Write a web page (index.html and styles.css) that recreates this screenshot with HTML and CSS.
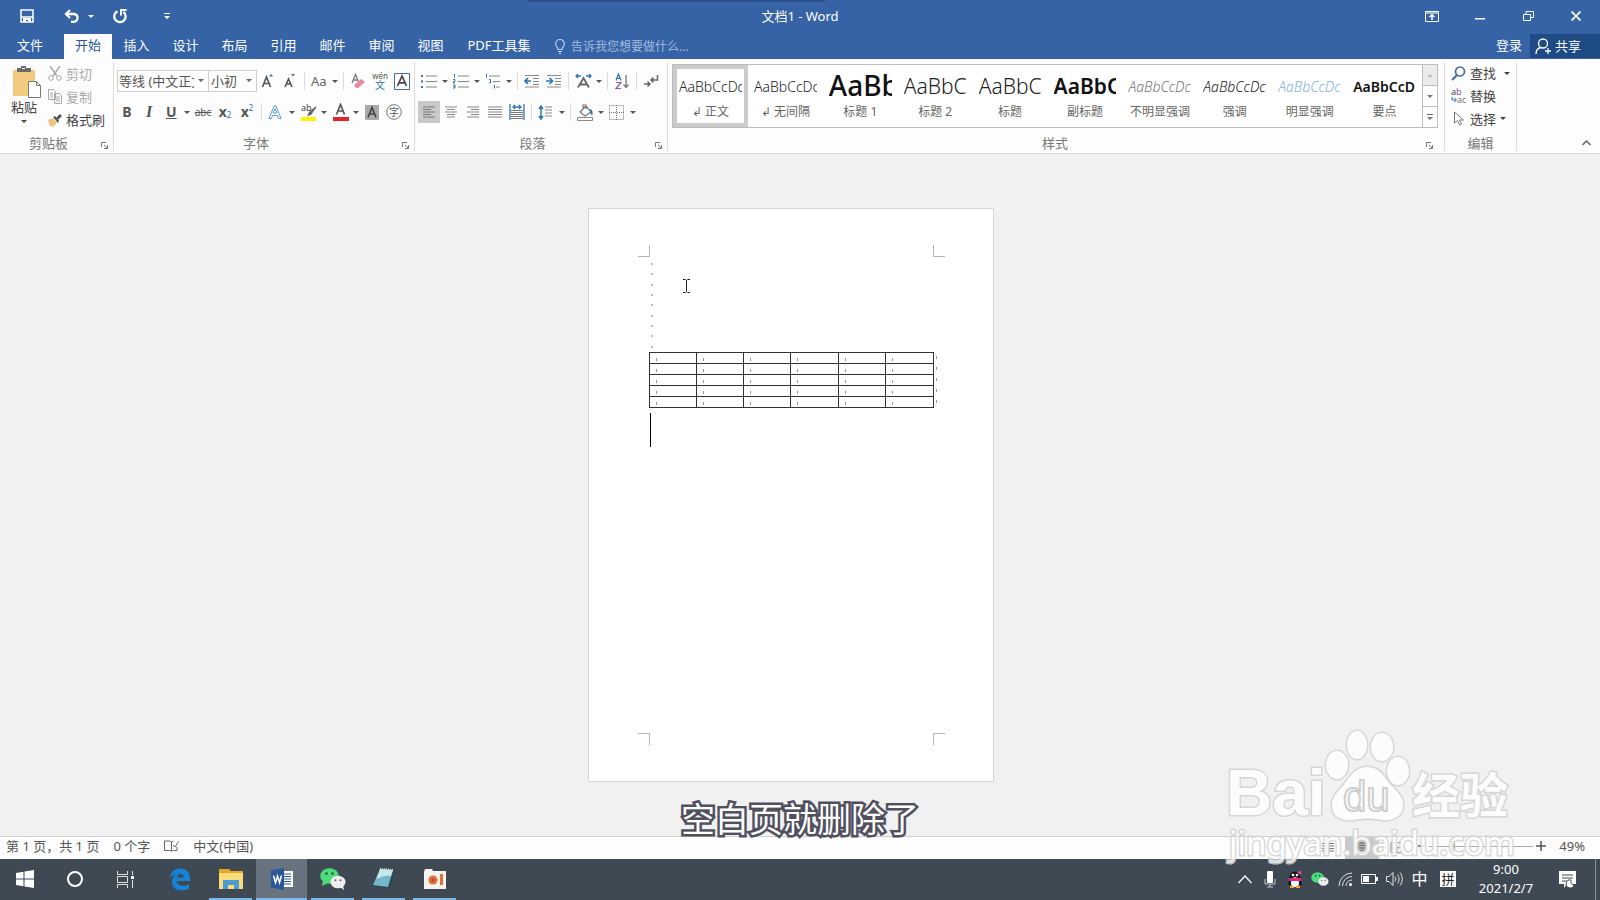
FILE: index.html
```html
<!DOCTYPE html>
<html lang="zh-CN">
<head>
    <meta charset="UTF-8">
    <meta name="viewport" content="width=device-width, initial-scale=1.0">
    <title>文档1 - Word</title>
    <link rel="stylesheet" href="styles.css">
</head>
<body>
<header class="titlebar">
    <div class="quick">
        <button class="quick-save" aria-label="保存"><svg width="14" height="14" viewBox="0 0 14 14"><path d="M1 1h12v12H1zM1 8h12" fill="none" stroke="#fff" stroke-width="1.5"/><path d="M3 9h8v4H8v-2H6v2H3z" fill="#fff"/></svg></button>
        <button class="quick-undo" aria-label="撤消"><svg width="16" height="14" viewBox="0 0 16 14"><path d="M2 5h7c6 0 6 7 0 8H7" fill="none" stroke="#fff" stroke-width="2.300"/><path d="M6 1L2 5l4 4" fill="none" stroke="#fff" stroke-width="2.300"/></svg></button>
        <button class="quick-more" aria-label="撤消列表"><i class="arrow"></i></button>
        <button class="quick-redo" aria-label="重复"><svg width="16" height="16" viewBox="0 0 16 16"><path d="M5.500 3.300A5.700 5.700 0 1 0 11.500 4" fill="none" stroke="#fff" stroke-width="2.300"/><path d="M9 7.500V2h5.500" fill="none" stroke="#fff" stroke-width="2"/></svg></button>
        <button class="quick-custom" aria-label="自定义快速访问工具栏"><svg width="6" height="6" viewBox="0 0 6 6"><path d="M0 0h6v1H0zM0 3h6L3 6z" fill="#fff"/></svg></button>
    </div>
    <div class="doc-name">文档1 - Word</div>
    <div class="window-buttons">
        <button aria-label="功能区显示选项"><svg width="14" height="11" viewBox="0 0 14 11"><path d="M.5.5h13v10H.5zM.5 2h13" fill="none" stroke="#fff"/><path d="M7 9V4M4.500 6L7 3.500 9.500 6" fill="none" stroke="#fff" stroke-width="1.500"/></svg></button>
        <button aria-label="最小化"><svg width="10" height="11" viewBox="0 0 10 11"><path d="M0 7h10v1.500H0z" fill="#fff"/></svg></button>
        <button aria-label="向下还原"><svg width="11" height="10" viewBox="0 0 11 10"><path d="M.5 3.500h7v6h-7zM3 3V.5h7.500v6H8" fill="none" stroke="#fff"/></svg></button>
        <button aria-label="关闭"><svg width="10" height="10" viewBox="0 0 10 10"><path d="M.5.5l9 9M9.500.5l-9 9" stroke="#fff" stroke-width="1.700"/></svg></button>
    </div>
</header>

<nav class="tabs">
    <a href="#" class="file">文件</a>
    <a href="#" class="active">开始</a>
    <a href="#">插入</a>
    <a href="#">设计</a>
    <a href="#">布局</a>
    <a href="#">引用</a>
    <a href="#">邮件</a>
    <a href="#">审阅</a>
    <a href="#">视图</a>
    <a href="#" class="wide">PDF工具集</a>
    <label class="tellme">
        <svg width="10" height="15" viewBox="0 0 10 15"><path d="M3 10.500C3 8 .7 7.500.7 4.800a4.300 4.300 0 0 1 8.600 0C9.300 7.500 7 8 7 10.500zM3 12.500h4M4 14.300h2" fill="none" stroke="#b9cbe8" stroke-width="1.200"/></svg>
        <input type="text" placeholder="告诉我您想要做什么..." aria-label="告诉我您想要做什么">
    </label>
    <a href="#" class="login">登录</a>
    <button class="share"><svg width="17" height="17" viewBox="0 0 17 17"><circle cx="8" cy="5.500" r="4.500" fill="none" stroke="#fff" stroke-width="1.300"/><path d="M1 16c0-4 2-6 5-6.500M13 10v6M10 13h6" fill="none" stroke="#fff" stroke-width="1.300"/></svg>共享</button>
</nav>

<section class="ribbon">
    <div class="group clipboard">
        <div class="group-body">
            <button class="paste">
                <svg width="30" height="32" viewBox="0 0 30 32"><path d="M1 4h22v26H1z" fill="#f3cb80"/><path d="M5 6V2h4V0h5v2h5v4z" fill="#6a6a6a"/><path d="M10 2h3v1h-3z" fill="#fff"/><path d="M16.500 15.500h8l4 4v12h-12z" fill="#fff" stroke="#777"/><path d="M24.500 15.500v4h4" fill="none" stroke="#777"/></svg>
                粘贴
                <i class="arrow"></i>
            </button>
            <div class="stack">
                <button class="off"><svg width="14" height="15" viewBox="0 0 14 15"><path d="M2 0l7 10M12 0L5 10" fill="none" stroke="#aaa" stroke-width="1.500"/><circle cx="3" cy="12" r="2.300" fill="none" stroke="#aaa"/><circle cx="11" cy="12" r="2.300" fill="none" stroke="#aaa"/></svg>剪切</button>
                <button class="off"><svg width="14" height="15" viewBox="0 0 14 15"><path d="M.5.5h5l2 2v8h-7zM6.500 4.500h5l2 2v8h-7z" fill="#fff" stroke="#aaa"/><path d="M2 4h3M2 6h3M2 8h3M8 8h4M8 10h4M8 12h4" stroke="#aaa"/></svg>复制</button>
                <button><svg width="14" height="14" viewBox="0 0 14 14"><path d="M0 7l5-2 4 5-4 4-3-1z" fill="#f0c27b"/><path d="M5 4l2-1 4 5-1 2z" fill="#555"/><path d="M8 5l4-4 2 2-4 4z" fill="#555"/></svg>格式刷</button>
            </div>
        </div>
        <footer>剪贴板<button class="launcher" aria-label="剪贴板选项"><svg width="7" height="7" viewBox="0 0 7 7"><path d="M.5 5V.5H5M3 3l3 3M6.500 3v3.500H3" fill="none" stroke="#777"/></svg></button></footer>
    </div>

    <div class="group font">
        <div class="group-body rows">
            <div class="row">
                <span class="combo combo-name"><select aria-label="字体"><option>等线 (中文正文)</option></select></span>
                <span class="combo combo-size"><select aria-label="字号"><option>小初</option></select></span>
                <button class="tool" aria-label="增大字号"><svg width="14" height="16" viewBox="0 0 14 16"><path d="M1.500 14L5.500 4l4 10M3 10.500h5" fill="none" stroke="#555" stroke-width="1.600"/><path d="M8 3.500L10 1l2 2.500z" fill="#41719c"/></svg></button>
                <button class="tool" aria-label="减小字号"><svg width="14" height="16" viewBox="0 0 14 16"><path d="M2 14l3.500-8L9 14M3.500 11h4" fill="none" stroke="#555" stroke-width="1.600"/><path d="M8 1l2 2.500L12 1z" fill="#41719c"/></svg></button>
                <i class="sep"></i>
                <button class="tool drop" aria-label="更改大小写"><span class="case">Aa</span><i class="arrow"></i></button>
                <i class="sep"></i>
                <button class="tool" aria-label="清除格式"><svg width="16" height="16" viewBox="0 0 16 16"><path d="M2 10L5.500 1.500 9 10M3.500 7h4" fill="none" stroke="#777" stroke-width="1.300"/><path d="M4 12l7-6 4 3-7 6H6z" fill="#e88ba0"/></svg></button>
                <button class="tool pinyin" aria-label="拼音指南"><small>wén</small><b>文</b></button>
                <button class="tool" aria-label="字符边框"><svg width="16" height="17" viewBox="0 0 16 17"><path d="M.5.5h15v16H.5z" fill="#fff" stroke="#41719c"/><path d="M3.500 13L8 3l4.500 10M5 9.800h6" fill="none" stroke="#444" stroke-width="1.700"/></svg></button>
            </div>
            <div class="row">
                <button class="tool letter"><b>B</b></button>
                <button class="tool letter serif"><b><em>I</em></b></button>
                <button class="tool letter drop"><b><u>U</u></b><i class="arrow"></i></button>
                <button class="tool strike">abc</button>
                <button class="tool letter script"><b>x</b><sub>2</sub></button>
                <button class="tool letter script"><b>x</b><sup>2</sup></button>
                <i class="sep"></i>
                <button class="tool drop" aria-label="文本效果"><svg width="14" height="15" viewBox="0 0 14 15"><path d="M1 13.500L6 1h2l5 12.500h-2.500l-1-3h-5l-1 3zM5 8h4L7 3.500z" fill="#fff" stroke="#5b9bd5"/></svg><i class="arrow"></i></button>
                <button class="tool drop" aria-label="突出显示"><svg width="17" height="18" viewBox="0 0 17 18"><path d="M1 14h15v4H1z" fill="#fff200"/><text x="1" y="8" class="tiny">ab</text><path d="M16 3L9 9l-2 4 4-1 5-7z" fill="#666"/></svg><i class="arrow"></i></button>
                <button class="tool drop" aria-label="字体颜色"><svg width="17" height="18" viewBox="0 0 17 18"><path d="M1 14h16v4H1z" fill="#e3242b"/><path d="M4.500 11.500L8.500 1.500l4 10M6 8h5" fill="none" stroke="#555" stroke-width="1.700"/></svg><i class="arrow"></i></button>
                <button class="tool" aria-label="字符底纹"><svg width="14" height="15" viewBox="0 0 14 15"><path d="M0 0h14v15H0z" fill="#aaa"/><path d="M3 12.500L7 2.500l4 10M4.500 9h5" fill="none" stroke="#444" stroke-width="1.700"/></svg></button>
                <button class="tool" aria-label="带圈字符"><svg width="16" height="16" viewBox="0 0 16 16"><circle cx="8" cy="8" r="7.300" fill="none" stroke="#777"/><text x="3" y="12" class="ringed">字</text></svg></button>
            </div>
        </div>
        <footer>字体<button class="launcher" aria-label="字体选项"><svg width="7" height="7" viewBox="0 0 7 7"><path d="M.5 5V.5H5M3 3l3 3M6.500 3v3.500H3" fill="none" stroke="#777"/></svg></button></footer>
    </div>

    <div class="group paragraph">
        <div class="group-body rows">
            <div class="row">
                <button class="tool drop" aria-label="项目符号"><svg width="16" height="15" viewBox="0 0 16 15"><path d="M0 1h2v2H0zM0 6.500h2v2H0zM0 12h2v2H0z" fill="#41719c"/><path d="M5 2h11M5 7.500h11M5 13h11" stroke="#888"/></svg><i class="arrow"></i></button>
                <button class="tool drop" aria-label="编号"><svg width="16" height="15" viewBox="0 0 16 15"><path d="M1.500 0v3.500M0 5.500h2v2H.5V9H2M0 11h2v3H0M.5 12.500H2" fill="none" stroke="#41719c"/><path d="M5 2h11M5 7.500h11M5 13h11" stroke="#888"/></svg><i class="arrow"></i></button>
                <button class="tool drop" aria-label="多级列表"><svg width="16" height="15" viewBox="0 0 16 15"><path d="M1.500 0v3.500M4 5.500h1.500V9H4M9.500 11v3.500" fill="none" stroke="#41719c"/><path d="M4 2h11M8 7.500h7M11 13h4" stroke="#888"/></svg><i class="arrow"></i></button>
                <i class="sep"></i>
                <button class="tool" aria-label="减少缩进量"><svg width="16" height="14" viewBox="0 0 16 14"><path d="M1 1.500h14M9 4.500h6M9 7.500h6M9 10.500h6M1 13h14" stroke="#888"/><path d="M7 7H1M4 4L1 7l3 3" fill="none" stroke="#2e75b6" stroke-width="1.700"/></svg></button>
                <button class="tool" aria-label="增加缩进量"><svg width="16" height="14" viewBox="0 0 16 14"><path d="M1 1.500h14M9 4.500h6M9 7.500h6M9 10.500h6M1 13h14" stroke="#888"/><path d="M0 7h6M3.500 4l3 3-3 3" fill="none" stroke="#2e75b6" stroke-width="1.700"/></svg></button>
                <i class="sep"></i>
                <button class="tool drop" aria-label="中文版式"><svg width="17" height="16" viewBox="0 0 17 16"><path d="M3 14.500L8.500 5 14 14.500M5 11.500h7" fill="none" stroke="#666" stroke-width="1.800"/><path d="M1 3h5M3 1L1 3l2 2M11 3h5M14 1l2 2-2 2" fill="none" stroke="#2e75b6" stroke-width="1.300"/></svg><i class="arrow"></i></button>
                <i class="sep"></i>
                <button class="tool" aria-label="排序"><svg width="15" height="17" viewBox="0 0 15 17"><path d="M1 7.500L3.500 1 6 7.500M2 5.500h3" fill="none" stroke="#2e75b6" stroke-width="1.200"/><path d="M1 9.500h5L1 15.500h5" fill="none" stroke="#8a5a9e" stroke-width="1.200"/><path d="M11 2v12M8.500 11.500L11 14.500l2.500-3" fill="none" stroke="#777" stroke-width="1.300"/></svg></button>
                <i class="sep"></i>
                <button class="tool" aria-label="显示编辑标记"><svg width="15" height="14" viewBox="0 0 15 14"><path d="M13.500 1v5H7M9.500 3.500L7 6l2.500 2.500M0 10h6M3.500 7.500L6 10l-2.500 2.500" fill="none" stroke="#666" stroke-width="1.500"/></svg></button>
            </div>
            <div class="row">
                <button class="tool on" aria-label="左对齐"><svg width="14" height="12" viewBox="0 0 14 12"><path d="M1 1h12M1 3.500h8M1 6h12M1 8.500h8M1 11h12" stroke="#777"/></svg></button>
                <button class="tool" aria-label="居中"><svg width="14" height="12" viewBox="0 0 14 12"><path d="M1 1h12M3 3.500h8M1 6h12M3 8.500h8M3 11h8" stroke="#888"/></svg></button>
                <button class="tool" aria-label="右对齐"><svg width="14" height="12" viewBox="0 0 14 12"><path d="M1 1h12M5 3.500h8M1 6h12M5 8.500h8M1 11h12" stroke="#888"/></svg></button>
                <button class="tool" aria-label="两端对齐"><svg width="14" height="12" viewBox="0 0 14 12"><path d="M0 1h14M0 3.500h14M0 6h14M0 8.500h14M0 11h14" stroke="#888"/></svg></button>
                <button class="tool" aria-label="分散对齐"><svg width="16" height="16" viewBox="0 0 16 16"><path d="M1 0v16M15 0v16M4 3h8M6 1L4 3l2 2M10 1l2 2-2 2" fill="none" stroke="#2e75b6" stroke-width="1.300"/><path d="M2 6.500h12M2 8.500h12M2 10.500h12M2 12.500h12M2 14.500h12" stroke="#777"/></svg></button>
                <i class="sep"></i>
                <button class="tool drop" aria-label="行距"><svg width="15" height="15" viewBox="0 0 15 15"><path d="M3 2v11M1 4l2-3 2 3M1 11l2 3 2-3" fill="none" stroke="#2e75b6" stroke-width="1.500"/><path d="M7 2h7M7 5h7M7 8h7M7 11h7" stroke="#888"/></svg><i class="arrow"></i></button>
                <i class="sep"></i>
                <button class="tool drop" aria-label="底纹"><svg width="17" height="17" viewBox="0 0 17 17"><path d="M3 8l6-6 5 6-6 4zM6 5V1h3v4" fill="#fff" stroke="#777" stroke-width="1.200"/><path d="M13 5c3 1 3 4 2 7l-2-4z" fill="#2e75b6"/><path d="M.5 13.500h15v3H.5z" fill="#fff" stroke="#888"/></svg><i class="arrow"></i></button>
                <button class="tool drop" aria-label="边框"><svg width="15" height="15" viewBox="0 0 15 15"><path d="M.5.5h14v14H.5zM7.500 0v15M0 7.500h15" fill="none" stroke="#777" stroke-dasharray="1 1"/></svg><i class="arrow"></i></button>
            </div>
        </div>
        <footer>段落<button class="launcher" aria-label="段落选项"><svg width="7" height="7" viewBox="0 0 7 7"><path d="M.5 5V.5H5M3 3l3 3M6.500 3v3.500H3" fill="none" stroke="#777"/></svg></button></footer>
    </div>

    <div class="group styles">
        <div class="group-body">
            <div class="gallery">
                <button class="style selected"><span class="sample">AaBbCcDc</span><span>↲ 正文</span></button>
                <button class="style"><span class="sample">AaBbCcDc</span><span>↲ 无间隔</span></button>
                <button class="style"><span class="sample huge">AaBb</span><span>标题 1</span></button>
                <button class="style"><span class="sample large">AaBbC</span><span>标题 2</span></button>
                <button class="style"><span class="sample large">AaBbC</span><span>标题</span></button>
                <button class="style"><span class="sample large strong">AaBbC</span><span>副标题</span></button>
                <button class="style"><span class="sample italic soft">AaBbCcDc</span><span>不明显强调</span></button>
                <button class="style"><span class="sample italic">AaBbCcDc</span><span>强调</span></button>
                <button class="style"><span class="sample italic blue">AaBbCcDc</span><span>明显强调</span></button>
                <button class="style"><span class="sample strong">AaBbCcD</span><span>要点</span></button>
                <div class="gallery-scroll">
                    <button class="dim" aria-label="上一行"><i class="arrow up"></i></button>
                    <button aria-label="下一行"><i class="arrow"></i></button>
                    <button class="more" aria-label="其他样式"><i class="arrow"></i></button>
                </div>
            </div>
        </div>
        <footer>样式<button class="launcher" aria-label="样式选项"><svg width="7" height="7" viewBox="0 0 7 7"><path d="M.5 5V.5H5M3 3l3 3M6.500 3v3.500H3" fill="none" stroke="#777"/></svg></button></footer>
    </div>

    <div class="group editing">
        <div class="group-body">
            <div class="stack">
                <button><svg width="15" height="15" viewBox="0 0 15 15"><circle cx="9" cy="5.500" r="4.500" fill="#fff" stroke="#41719c" stroke-width="1.700"/><path d="M6 9l-5 5" stroke="#41719c" stroke-width="2.200"/></svg>查找<i class="arrow far"></i></button>
                <button><svg width="15" height="16" viewBox="0 0 15 16"><text x="0" y="7" class="tiny">a<tspan fill="#8a5a9e">b</tspan></text><text x="6" y="15" class="tiny dim-text">ac</text><path d="M1 9v3h4M3.500 10l2 2-2 2" fill="none" stroke="#2e75b6"/></svg>替换</button>
                <button><svg width="15" height="15" viewBox="0 0 15 15"><path d="M3.500 1v11l3-2.500 2 4.500 2-1-2-4h4z" fill="#fff" stroke="#777"/></svg>选择<i class="arrow"></i></button>
            </div>
        </div>
        <footer>编辑</footer>
    </div>
    <button class="collapse" aria-label="折叠功能区"><svg width="9" height="6" viewBox="0 0 9 6"><path d="M.5 5l4-4 4 4" fill="none" stroke="#666" stroke-width="1.500"/></svg></button>
</section>

<main class="canvas">
    <article class="page">
        <div class="corners top"><i></i><i></i></div>
        <div class="content">
            <div class="lines">
                <i></i><i></i><i></i><i></i><i></i><i></i><i></i><i></i><i></i>
            </div>
            <table>
                <tr><td></td><td></td><td></td><td></td><td></td><td></td></tr>
                <tr><td></td><td></td><td></td><td></td><td></td><td></td></tr>
                <tr><td></td><td></td><td></td><td></td><td></td><td></td></tr>
                <tr><td></td><td></td><td></td><td></td><td></td><td></td></tr>
                <tr><td></td><td></td><td></td><td></td><td></td><td></td></tr>
            </table>
            <div class="caret"></div>
            <svg class="pointer" width="7" height="14" viewBox="0 0 7 14"><path d="M0 .5h2.500l1 1 1-1H7M0 13.500h2.500l1-1 1 1H7M3.500 1.500v11" fill="none" stroke="#222"/></svg>
        </div>
        <div class="corners bottom"><i></i><i></i></div>
    </article>
</main>

<footer class="status">
    <span>第 1 页，共 1 页</span>
    <span>0 个字</span>
    <svg width="15" height="12" viewBox="0 0 15 12"><path d="M.5 1h5l2 1 2-1M7.500 2v9l-2-.5h-5V1M7.500 11l2-.5H13V7" fill="none" stroke="#666"/><path d="M9 5l2 2 3.500-5.500" fill="none" stroke="#666"/></svg>
    <span>中文(中国)</span>
    <div class="views">
        <button aria-label="阅读视图"><svg width="14" height="12" viewBox="0 0 14 12"><path d="M1 1.500h5M1 4h5M1 6.500h5M1 9h5M8 1.500h5M8 4h5M8 6.500h5M8 9h5" stroke="#777"/></svg></button>
        <button class="on" aria-label="页面视图"><svg width="12" height="12" viewBox="0 0 12 12"><path d="M1 1h10M0 3.500h12M0 6h12M0 8.500h12M1 11h10" stroke="#777" stroke-width="1.300"/></svg></button>
        <button aria-label="Web 版式视图"><svg width="13" height="12" viewBox="0 0 13 12"><path d="M6 .5H1v10h5M2 3h4M2 6h3M8 .5h4v4" fill="none" stroke="#777"/><circle cx="9.500" cy="8" r="3" fill="none" stroke="#777"/></svg></button>
    </div>
    <button class="zoom" aria-label="缩小"><svg width="10" height="10" viewBox="0 0 10 10"><path d="M2 5h6" stroke="#555" stroke-width="1.500"/></svg></button>
    <input type="range" min="10" max="190" value="49" aria-label="显示比例">
    <button class="zoom" aria-label="放大"><svg width="10" height="10" viewBox="0 0 10 10"><path d="M0 5h10M5 0v10" stroke="#555" stroke-width="1.500"/></svg></button>
    <span class="percent">49%</span>
</footer>

<footer class="taskbar">
    <div class="apps">
        <button class="sys" aria-label="开始"><svg width="18" height="18" viewBox="0 0 18 18"><path d="M0 3l7.500-1.200v6.700H0zM8.500 1.600L18 0v8.500H8.500zM0 9.500h7.500v6.700L0 15zM8.500 9.500H18V18l-9.500-1.600z" fill="#fff"/></svg></button>
        <button class="sys" aria-label="搜索"><svg width="18" height="18" viewBox="0 0 18 18"><circle cx="9" cy="9" r="7" fill="none" stroke="#fff" stroke-width="2"/></svg></button>
        <button class="sys" aria-label="任务视图"><svg width="18" height="17" viewBox="0 0 18 17"><path d="M1.500 0v3.500h10V0M1.500 17v-3.500h10V17M1.500 5.500h10v6h-10zM16.500 0v4M16.500 9v8" fill="none" stroke="#dfe2e5"/><path d="M15 5h3v3h-3z" fill="#fff"/></svg></button>
        <button class="app first" aria-label="Edge"><svg width="22" height="23" viewBox="0 0 22 23"><path d="M1 10C2 3.500 6 .5 11.500.5 18 .5 21 5 21 10v3H7.500c.3 3 3 4.800 6.500 4.800 2.200 0 4.200-.6 6-1.600v4.600c-2 1.100-4.200 1.700-7 1.700-6.500 0-10-3.500-10-8.500 0-4 2.200-6.800 5.500-8.300C5 6.600 2.500 7.800 1 10zM8 9.500h6.700c0-2.400-1.200-3.800-3.200-3.800S8.300 7.200 8 9.500z" fill="#1583d8"/></svg></button>
        <button class="app open" aria-label="文件资源管理器"><svg width="24" height="20" viewBox="0 0 24 20"><path d="M0 0h10l2 2h12v5H0z" fill="#e8a823"/><path d="M0 4h24v16H0z" fill="#fbdc7a"/><path d="M4 20v-9h16v9h-5v-4H9v4z" fill="#4a9bd3"/></svg></button>
        <button class="app open current" aria-label="Word"><svg width="22" height="22" viewBox="0 0 22 22"><path d="M10 3h12v16H10z" fill="#fff"/><path d="M13 6h7M13 8.500h7M13 11h7M13 13.500h7M13 16h7" stroke="#2b579a"/><path d="M0 2.500L13 0v22L0 19.500z" fill="#2b579a"/><path d="M2.500 7.500L4.500 14.500 6.500 8l2 6.500 2-7" fill="none" stroke="#fff" stroke-width="1.500"/></svg></button>
        <button class="app open" aria-label="微信"><svg width="26" height="22" viewBox="0 0 26 22"><ellipse cx="9.500" cy="8" rx="9.300" ry="7.800" fill="#4ddb7b"/><path d="M3 13l-1 5 6-3z" fill="#4ddb7b"/><circle cx="6.500" cy="5.500" r="1.300" fill="#17642f"/><circle cx="12.500" cy="5.500" r="1.300" fill="#17642f"/><ellipse cx="18" cy="14" rx="7.500" ry="6.300" fill="#eee"/><path d="M20 19l4 3-1-5z" fill="#eee"/><circle cx="15.500" cy="12.300" r="1" fill="#666"/><circle cx="20.500" cy="12.300" r="1" fill="#666"/></svg></button>
        <button class="app open" aria-label="记事本"><svg width="22" height="22" viewBox="0 0 22 22"><path d="M7 1l15 2-5 18-17-3z" fill="#2c4954"/><path d="M7 1l13 1-5 17-15-2z" fill="#76b8c9"/><path d="M7 1l13 1-2 6C12 7 8 9 3.500 11z" fill="#c5e8ee"/><path d="M7 1l13 1" stroke="#ddd" stroke-width="2" stroke-dasharray="1 1"/></svg></button>
        <button class="app open" aria-label="录屏工具"><svg width="22" height="20" viewBox="0 0 22 20"><path d="M0 3l1-3h7l1 2h13v18H0z" fill="#f6f3f1"/><circle cx="9" cy="11" r="4.500" fill="#e07233"/><circle cx="9" cy="11" r="1.800" fill="#b94545"/><path d="M16 5h3v11h-3z" fill="#e07233"/></svg></button>
    </div>
    <div class="tray">
        <button aria-label="显示隐藏的图标"><svg width="14" height="9" viewBox="0 0 14 9"><path d="M.5 8L7 1l6.500 7" fill="none" stroke="#fff" stroke-width="1.200"/></svg></button>
        <button aria-label="麦克风"><svg width="12" height="18" viewBox="0 0 12 18"><rect x="3" y="1" width="6" height="12" rx="1" fill="#fff"/><path d="M1 9v5h10V9M6 14v3M3 17h6" fill="none" stroke="#ccc"/></svg></button>
        <button aria-label="QQ"><svg width="14" height="17" viewBox="0 0 14 17"><ellipse cx="7" cy="7" rx="5.500" ry="6.500" fill="#15151c"/><path d="M1 10h12l1 4H0z" fill="#15151c"/><ellipse cx="7" cy="12" rx="4" ry="4" fill="#fff"/><path d="M1 7h12v3H1z" fill="#e5238a"/><circle cx="5" cy="4" r="1.300" fill="#fff"/><circle cx="9" cy="4" r="1.300" fill="#fff"/><path d="M9 1l4-1v4z" fill="#ff45ac"/><path d="M4.500 6h5L7 7.500z" fill="#f5a623"/><path d="M2 15h4v2H2zM8 15h4v2H8z" fill="#f5a623"/></svg></button>
        <button aria-label="微信"><svg width="18" height="15" viewBox="0 0 26 22"><ellipse cx="9.500" cy="8" rx="9.300" ry="7.800" fill="#4ddb7b"/><circle cx="6.500" cy="5.500" r="1.300" fill="#17642f"/><circle cx="12.500" cy="5.500" r="1.300" fill="#17642f"/><ellipse cx="18" cy="14" rx="7.500" ry="6.300" fill="#eee"/><circle cx="15.500" cy="12.300" r="1" fill="#666"/><circle cx="20.500" cy="12.300" r="1" fill="#666"/></svg></button>
        <button aria-label="网络"><svg width="14" height="14" viewBox="0 0 14 14"><path d="M1 14A13 13 0 0 1 14 1M4.500 14A9.500 9.500 0 0 1 14 4.500M8 14a6 6 0 0 1 6-6" fill="none" stroke="#ddd"/><circle cx="12.500" cy="12.500" r="1.500" fill="#fff"/></svg></button>
        <button aria-label="电池"><svg width="17" height="10" viewBox="0 0 17 10"><path d="M.5.5h14v9H.5z" fill="none" stroke="#fff"/><path d="M2 2h6v6H2zM15 3h2v4h-2z" fill="#fff"/></svg></button>
        <button aria-label="音量"><svg width="17" height="14" viewBox="0 0 17 14"><path d="M.5 4.500H3l4-4v13l-4-4H.5zM9 4.500c1 1.500 1 3.500 0 5M11.500 2.500c2 2.500 2 6.500 0 9M14 .5c3 3.500 3 9.500 0 13" fill="none" stroke="#e5e5e5"/></svg></button>
        <button class="lang">中</button>
        <button class="ime"><span>拼</span></button>
        <div class="clock"><span>9:00</span><span>2021/2/7</span></div>
        <button class="notice" aria-label="通知"><svg width="17" height="17" viewBox="0 0 17 17"><path d="M0 0h17v13H8l-3 4v-4H0z" fill="#fff"/><path d="M3 4h11M3 7h11M3 10h6" stroke="#3f4954"/><path d="M12 9a4 4 0 0 0 3 5 4 4 0 1 1-3-5z" fill="#fff" stroke="#3f4954"/></svg></button>
        <button class="desktop" aria-label="显示桌面"></button>
    </div>
</footer>

<p class="caption">空白页就删除了</p>
<svg class="watermark" width="300" height="150" viewBox="0 0 300 150">
    <g class="outline">
        <text x="1" y="94" class="wm-latin">Bai</text>
        <text x="187" y="92" class="wm-cjk">经验</text>
        <ellipse cx="112" cy="44" rx="11" ry="14"/>
        <ellipse cx="132" cy="24" rx="10" ry="14"/>
        <ellipse cx="157" cy="26" rx="11" ry="14"/>
        <ellipse cx="173" cy="50" rx="11" ry="14"/>
        <path d="M142 46c12 0 17 9 22 16 7 8 15 13 14 23-1 12-12 15-21 14-9-2-20-2-29 0-10 1-20-2-21-13-1-11 7-16 13-24 6-8 11-16 22-16z"/>
        <text x="4" y="134" class="wm-url">jingyan.baidu.com</text>
    </g>
    <text x="118" y="90" class="wm-du">du</text>
</svg>
</body>
</html>
```

FILE: styles.css
```css
* {
    box-sizing: border-box;
}
body {
    margin: 0;
    min-height: 100vh;
    display: flex;
    flex-direction: column;
    position: relative;
    overflow: hidden;
    font-family: "Noto Sans", "Noto Sans CJK SC", sans-serif;
    font-size: 13px;
    line-height: 16px;
    color: #555;
    background: #f1f1f1;
}
button, input, select {
    margin: 0;
    padding: 0;
    border: none;
    background: none;
    font: inherit;
    color: inherit;
}
button {
    display: flex;
    align-items: center;
    justify-content: center;
    white-space: nowrap;
}
a {
    color: inherit;
    text-decoration: none;
}
svg {
    flex: none;
}
.arrow {
    flex: none;
    border: 3px solid transparent;
    border-top-color: currentColor;
    border-bottom: none;
}
.arrow.up {
    border-top: none;
    border-bottom: 3px solid #bbb;
}

/* title bar */
.titlebar {
    display: grid;
    grid-template-columns: 1fr auto 1fr;
    align-items: center;
    height: 34px;
    padding-bottom: 2px;
    color: #fff;
    background: #3563a6;
}
.titlebar::before {
    content: "";
    position: absolute;
    top: 0;
    left: 33%;
    width: 297px;
    height: 2px;
    background: #2a4f8a;
}
.quick, .window-buttons {
    display: flex;
}
.quick {
    padding-left: 16px;
}
.quick-save {
    width: 22px;
    margin-right: 20px;
}
.quick-undo {
    width: 28px;
}
.quick-more {
    width: 10px;
    margin-right: 13px;
}
.quick-redo {
    width: 22px;
    margin-right: 27px;
}
.quick-custom {
    width: 18px;
}
.window-buttons {
    justify-content: flex-end;
}
.window-buttons button {
    width: 48px;
    height: 30px;
}

/* tabs */
.tabs {
    display: flex;
    height: 25px;
    color: #fff;
    background: #3563a6;
    line-height: 23px;
}
.tabs a {
    width: 49px;
    text-align: center;
}
.tabs .file {
    width: 60px;
    margin-right: 4px;
}
.tabs .active {
    color: #2b579a;
    background: #fdfdfd;
    width: 48px;
}
.tabs .wide {
    width: 86px;
    padding-left: 2px;
}
.tellme {
    display: flex;
    align-items: center;
    flex: 1;
    gap: 6px;
    padding-left: 14px;
}
.tellme input {
    flex: 1;
    font-size: 12px;
    outline: none;
}
.tellme input::placeholder {
    color: #a3bade;
    opacity: 1;
}
.tabs .login {
    width: 42px;
}
.share {
    width: 70px;
    height: 24px;
    gap: 3px;
    padding-right: 14px;
    background: #1e4a86;
}

/* ribbon */
.ribbon {
    display: flex;
    height: 95px;
    padding: 3px 0 2px;
    background: #fdfdfd;
    border-bottom: 1px solid #d8d8d8;
}
.group {
    display: flex;
    flex-direction: column;
    flex: none;
    border-right: 1px solid #dcdcdc;
}
.group-body {
    display: flex;
    flex: 1;
}
.group footer {
    position: relative;
    height: 16px;
    color: #777;
    text-align: center;
}
.launcher {
    position: absolute;
    right: 5px;
    bottom: 2px;
}
.clipboard {
    width: 114px;
}
.clipboard footer {
    padding-right: 16px;
}
.paste {
    flex-direction: column;
    justify-content: flex-start;
    width: 48px;
    padding-top: 4px;
    gap: 1px;
    color: #444;
}
.paste svg {
    margin-left: 5px;
}
.paste .arrow {
    margin-top: 4px;
}
.stack {
    display: flex;
    flex-direction: column;
    justify-content: space-around;
    height: 70px;
}
.stack button {
    justify-content: flex-start;
    gap: 4px;
    color: #444;
}
.stack .off {
    color: #aaa;
}
.font {
    width: 301px;
    padding-left: 2px;
}
.paragraph {
    width: 253px;
    padding-left: 3px;
}
.font footer {
    padding-right: 18px;
}
.paragraph footer {
    padding-right: 20px;
}
.rows {
    flex-direction: column;
    padding-top: 8px;
    gap: 9px;
}
.row {
    display: flex;
    align-items: center;
    height: 22px;
}
.combo {
    position: relative;
    height: 22px;
    border: 1px solid #d0d0d0;
}
.combo::after {
    content: "";
    position: absolute;
    top: 8px;
    right: 4px;
    border: 3px solid transparent;
    border-top-color: #666;
    border-bottom: none;
}
.combo select {
    appearance: none;
    width: 100%;
    height: 20px;
    padding: 0 14px 0 1px;
    line-height: 20px;
    text-overflow: clip;
    outline: none;
}
.combo-name {
    width: 92px;
    margin-left: 1px;
}
.combo-size {
    width: 48px;
    border-left: none;
}
.combo-size select {
    padding-left: 2px;
}
.tool {
    flex: none;
    width: 22px;
    height: 22px;
}
.tool.drop {
    width: 32px;
    justify-content: space-between;
    padding: 0 2px 0 3px;
}
.tool.on {
    background: #c9c9c9;
}
.sep {
    flex: none;
    width: 1px;
    height: 18px;
    margin: 0 3px;
    background: #dcdcdc;
}
.case {
    color: #666;
}
.letter {
    font-size: 14px;
}
.letter.drop {
    padding-left: 6px;
}
.serif {
    font-family: "Liberation Serif", serif;
    font-size: 16px;
}
.script sub, .script sup {
    font-size: 8px;
    line-height: 10px;
    color: #2e75b6;
}
.script sub {
    align-self: flex-end;
    padding-bottom: 3px;
}
.script sup {
    align-self: flex-start;
    padding-top: 2px;
}
.strike {
    font-size: 10px;
    text-decoration: line-through;
}
.pinyin {
    flex-direction: column;
}
.pinyin small {
    font-size: 8px;
    line-height: 8px;
}
.pinyin b {
    font-size: 10px;
    font-weight: normal;
    line-height: 10px;
    color: #2e75b6;
}
.tiny {
    font-size: 9px;
    fill: #444;
}
.dim-text {
    fill: #777;
}
.ringed {
    font-size: 10px;
    fill: #555;
}

/* style gallery */
.styles {
    flex: 1;
    min-width: 0;
    padding: 0 6px 0 4px;
}
.gallery {
    display: flex;
    flex: 1;
    min-width: 0;
    height: 64px;
    margin-top: 2px;
    background: #fff;
    border: 1px solid #bdbdbd;
}
.style {
    flex: 1 1 0;
    min-width: 0;
    flex-direction: column;
    border: 4px solid transparent;
    font-size: 12px;
    color: #666;
}
.style.selected {
    border-color: #cbcbcb;
}
.sample {
    align-self: stretch;
    margin: 0 2px;
    height: 32px;
    line-height: 30px;
    overflow: hidden;
    text-align: left;
    font-size: 14px;
    font-weight: 300;
    color: #222;
}
.sample.large {
    font-size: 21px;
    line-height: 28px;
}
.sample.huge {
    font-size: 28px;
    line-height: 26px;
    font-weight: 500;
    color: #111;
}
.sample.strong {
    font-weight: 600;
    color: #111;
}
.sample.italic {
    font-style: italic;
}
.sample.soft {
    color: #777;
}
.sample.blue {
    color: #7fb1da;
}
.gallery-scroll {
    display: flex;
    flex: none;
    flex-direction: column;
    width: 15px;
    border-left: 1px solid #bdbdbd;
}
.gallery-scroll button {
    flex: 1;
    color: #777;
}
.gallery-scroll button + button {
    border-top: 1px solid #bdbdbd;
}
.gallery-scroll .dim {
    background: #ebebeb;
}
.gallery-scroll .more {
    flex-direction: column;
    gap: 2px;
}
.gallery-scroll .more::before {
    content: "";
    width: 6px;
    height: 1px;
    background: #666;
}
.editing {
    width: 72px;
    padding-left: 6px;
}
.editing footer {
    padding-right: 6px;
}
.editing .stack {
    height: 68px;
}
.arrow.far {
    margin-left: 4px;
}
.collapse {
    align-self: flex-end;
    width: 83px;
    height: 16px;
    padding-left: 56px;
}

/* document */
.canvas {
    flex: 1;
    padding: 54px 19px 54px 0;
}
.page {
    display: flex;
    flex-direction: column;
    width: 406px;
    height: 574px;
    margin: 0 auto;
    padding: 36px 48px 36px 49px;
    background: #fff;
    border: 1px solid #d6d6d6;
}
.corners {
    display: flex;
    justify-content: space-between;
}
.corners i {
    width: 12px;
    height: 12px;
    border: 0 solid #b5b5b5;
}
.corners.top i {
    border-bottom-width: 1px;
}
.corners.bottom i {
    border-top-width: 1px;
}
.corners i:first-child {
    border-right-width: 1px;
}
.corners i:last-child {
    border-left-width: 1px;
}
.content {
    position: relative;
    flex: 1;
    padding: 0 11px;
}
.lines {
    display: flex;
    flex-direction: column;
    height: 95px;
    padding: 2px 0 0 2px;
}
.lines i {
    flex: 1;
    display: flex;
    align-items: center;
}
.lines i::after, td::after {
    content: "";
    width: 2px;
    height: 2px;
    background: #bbb;
}
table {
    width: 100%;
    table-layout: fixed;
    border-collapse: collapse;
}
td {
    position: relative;
    height: 11px;
    padding: 0;
    border: 1px solid #333;
    line-height: 0;
}
td::after {
    display: block;
    margin: 2px 0 0 6px;
    width: 1px;
    height: 3px;
    background: #999;
}
td:last-child::before {
    content: "";
    position: absolute;
    right: -4px;
    top: 3px;
    width: 1px;
    height: 3px;
    background: #999;
}
.caret {
    width: 1px;
    height: 34px;
    margin: 5px 0 0 1px;
    background: #000;
}
.pointer {
    position: absolute;
    left: 45px;
    top: 22px;
}

/* status bar */
.status {
    display: flex;
    align-items: center;
    height: 23px;
    padding: 0 15px 4px 6px;
    gap: 16px;
    background: #fdfdfd;
    border-top: 1px solid #d0d0d0;
}
.status span + span, .status span + svg, .status svg + span {
    margin-left: -2px;
}
.views {
    display: flex;
    align-self: stretch;
    margin-left: auto;
    margin-bottom: -4px;
}
.views button {
    width: 34px;
}
.views .on {
    background: #c9c9c9;
}
.zoom {
    width: 12px;
    margin: 0 -14px;
}
input + .zoom {
    margin-right: -4px;
}
.status input {
    appearance: none;
    width: 104px;
    height: 12px;
    background: linear-gradient(#aaa, #aaa) center / 100% 1px no-repeat;
}
.status input::-webkit-slider-thumb {
    appearance: none;
    width: 4px;
    height: 11px;
    background: #777;
}

/* taskbar */
.taskbar {
    display: flex;
    justify-content: space-between;
    height: 42px;
    color: #fff;
    background: #3f4954;
}
.taskbar button, .clock {
    padding-bottom: 2px;
}
.apps, .tray {
    display: flex;
}
.sys {
    width: 50px;
}
.app {
    width: 51px;
    position: relative;
}
.app.first {
    margin-left: 4px;
}
.app.open::after {
    content: "";
    position: absolute;
    left: 4px;
    right: 4px;
    bottom: 0;
    height: 3px;
    background: #76b9ed;
}
.app.current {
    background: #69727f;
}
.app.current::after {
    left: 0;
    right: 0;
}
.tray button {
    width: 25px;
}
.tray .lang {
    font-size: 16px;
}
.tray .ime {
    width: 32px;
}
.ime span {
    width: 16px;
    line-height: 16px;
    background: #fff;
    color: #222;
}
.clock {
    display: flex;
    flex-direction: column;
    justify-content: center;
    width: 84px;
    font-size: 13px;
    line-height: 19px;
    text-align: center;
}
.tray .notice {
    width: 38px;
}
.tray .desktop {
    width: 5px;
    margin-left: 9px;
    border-left: 1px solid #8a929b;
}

/* things lying over the window */
.caption {
    position: absolute;
    left: 0;
    right: 0;
    bottom: 58px;
    margin: 0;
    font-size: 34px;
    line-height: 48px;
    text-align: center;
    color: #fff;
    -webkit-text-stroke: 5px #50505f;
    paint-order: stroke fill;
    pointer-events: none;
}
.watermark {
    position: absolute;
    right: 75px;
    bottom: 30px;
    pointer-events: none;
}
.outline {
    fill: #fff;
    stroke: #d2d2d2;
    stroke-width: 3px;
    paint-order: stroke fill;
    opacity: 0.85;
}
.wm-latin {
    font: bold 64px "Liberation Sans", sans-serif;
}
.wm-cjk {
    font: bold 48px "Noto Sans CJK SC", sans-serif;
}
.wm-url {
    font-size: 33px;
}
.wm-du {
    font: 42px "Liberation Sans", sans-serif;
    fill: #fff;
    stroke: #cfcfcf;
    stroke-width: 2px;
}
```
